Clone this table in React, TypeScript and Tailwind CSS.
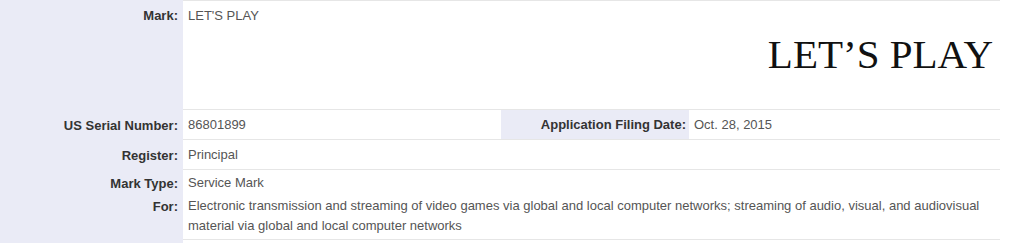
import React from 'react';

const labelCls =
  'w-[183px] shrink-0 bg-[#eaebf6] text-right pr-[5px] font-bold text-[#333333]';

function Row({ label, children, top = false }: { label: React.ReactNode; children: React.ReactNode; top?: boolean }) {
  return (
    <div className="flex">
      <div className={labelCls}>{label}</div>
      <div className={`flex-1 border-b border-[#e6e6e6] ${top ? 'border-t' : ''}`}>{children}</div>
    </div>
  );
}

export default function App() {
  return (
    <div className="w-[1024px] h-[243px] overflow-hidden bg-white text-[13px] leading-[18px] text-[#555555] font-['Liberation_Sans',Arial,sans-serif]">
      <div className="w-[1000px] flex flex-col">
        {/* Mark row with the drawing */}
        <Row top label={<div className="pt-[7px] h-[109px]">Mark:</div>}>
          <div className="h-[108px] pt-[6px] pl-[5px] pr-[7px] flex flex-col">
            <div>LET'S PLAY</div>
            <div className="mt-[9px] self-end text-[41px] leading-none text-[#111111] font-['Liberation_Serif','Times_New_Roman',serif]">
              LET’S PLAY
            </div>
          </div>
        </Row>

        <Row label={<div className="pt-[7px] h-[30px]">US Serial Number:</div>}>
          <div className="flex h-[29px]">
            <div className="w-[318px] pl-[5px] pt-[6px]">86801899</div>
            <div className="w-[188px] bg-[#eaebf6] text-right pr-[3px] pt-[6px] font-bold text-[#333333]">
              Application Filing Date:
            </div>
            <div className="flex-1 pl-[5px] pt-[6px]">Oct. 28, 2015</div>
          </div>
        </Row>

        <Row label={<div className="pt-[7px] h-[30px]">Register:</div>}>
          <div className="h-[29px] pl-[5px] pt-[6px]">Principal</div>
        </Row>

        <Row
          label={
            <div className="pt-[4px] h-[70px] leading-[20px]">
              <div>Mark Type:</div>
              <div className="mt-[3px]">For:</div>
            </div>
          }
        >
          <div className="h-[69px] pl-[5px] pr-[4px] pt-[3px] leading-[20px]">
            <div>Service Mark</div>
            <div className="mt-[3px]">
              Electronic transmission and streaming of video games via global and local computer networks; streaming of
              audio, visual, and audiovisual material via global and local computer networks
            </div>
          </div>
        </Row>

        <div className="flex">
          <div className="w-[183px] h-[20px] bg-[#eaebf6]" />
        </div>
      </div>
    </div>
  );
}
